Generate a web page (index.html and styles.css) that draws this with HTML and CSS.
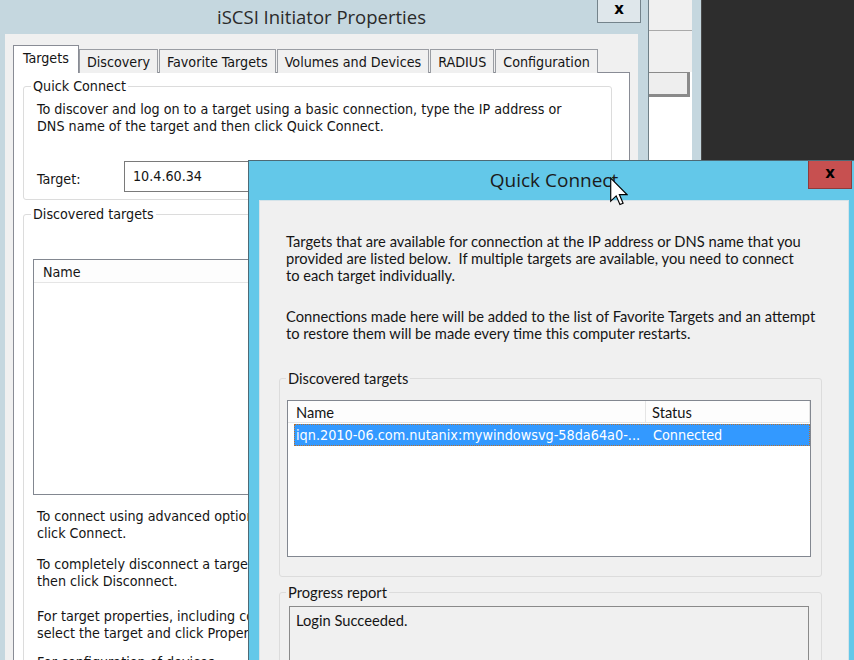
FILE: index.html
```html
<!DOCTYPE html>
<html>
<head>
<meta charset="utf-8">
<title>iSCSI Initiator Properties - Quick Connect</title>
<link rel="stylesheet" href="styles.css">
</head>
<body>
<div class="desktop">

  <div class="win side">
    <div class="side-top"></div>
    <div class="side-mid"></div>
    <div class="side-body">
      <div class="side-field"></div>
    </div>
  </div>

  <div class="win main">
    <div class="titlebar">
      <span class="title">iSCSI Initiator Properties</span>
      <div class="close close-gray">x</div>
    </div>
    <div class="client">
      <div class="tabs">
        <div class="tab active">Targets</div>
        <div class="tab">Discovery</div>
        <div class="tab">Favorite Targets</div>
        <div class="tab">Volumes and Devices</div>
        <div class="tab">RADIUS</div>
        <div class="tab">Configuration</div>
      </div>
      <div class="panel">
        <fieldset class="group group-qc">
          <legend>Quick Connect</legend>
          <p class="txt qc-intro">To discover and log on to a target using a basic connection, type the IP address or<br>DNS name of the target and then click Quick Connect.</p>
          <div class="target-row">
            <span class="target-label">Target:</span>
            <div class="input">10.4.60.34</div>
          </div>
        </fieldset>
        <fieldset class="group group-dt">
          <legend>Discovered targets</legend>
          <div class="list list-main">
            <div class="list-head"><span class="head-cell head-main">Name</span></div>
          </div>
          <p class="txt note n1">To connect using advanced options, select a<br>click Connect.</p>
          <p class="txt note n2">To completely disconnect a target, sel<br>then click Disconnect.</p>
          <p class="txt note n3">For target properties, including co<br>select the target and click Propert</p>
          <p class="txt note n4">For configuration of devices</p>
        </fieldset>
      </div>
    </div>
  </div>

  <div class="win dialog">
    <div class="titlebar dlg-titlebar">
      <span class="title">Quick Connect</span>
      <div class="close close-red">x</div>
    </div>
    <div class="dlg-client">
      <p class="dtxt d1">Targets that are available for connection at the IP address or DNS name that you<br>provided are listed below.&nbsp; If multiple targets are available, you need to connect<br>to each target individually.</p>
      <p class="dtxt d2">Connections made here will be added to the list of Favorite Targets and an attempt<br>to restore them will be made every time this computer restarts.</p>
      <fieldset class="group dgroup dg1">
        <legend>Discovered targets</legend>
        <div class="list list-dlg">
          <div class="list-head">
            <span class="head-cell hc-name">Name</span>
            <span class="head-cell hc-status">Status</span>
          </div>
          <div class="row selected">
            <span class="cell c-name">iqn.2010-06.com.nutanix:mywindowsvg-58da64a0-...</span>
            <span class="cell c-status">Connected</span>
          </div>
        </div>
      </fieldset>
      <fieldset class="group dgroup dg2">
        <legend>Progress report</legend>
        <div class="report">Login Succeeded.</div>
      </fieldset>
    </div>
  </div>

  <svg class="cursor" width="18" height="29" viewBox="0 0 12.5 19.5">
    <path d="M0.5 0.5 L0.5 16.5 L4.3 12.8 L6.9 18.8 L9.1 17.9 L6.5 11.9 L11.8 11.9 Z" fill="#ffffff" stroke="#000000" stroke-width="0.8" stroke-linejoin="miter"/>
  </svg>

</div>
</body>
</html>
```

FILE: styles.css
```css
* { box-sizing: border-box; }
html, body { margin: 0; padding: 0; }
body {
  width: 854px;
  height: 660px;
  overflow: hidden;
  background: #2d2d2d;
  font-family: "DejaVu Sans Condensed", "DejaVu Sans", sans-serif;
  font-stretch: condensed;
  font-size: 14.2px;
  color: #151515;
}
.desktop {
  position: relative;
  width: 854px;
  height: 660px;
  overflow: hidden;
  background: #2d2d2d;
}
.win { position: absolute; }

/* ---------- window peeking on the right ---------- */
.side {
  left: 560px;
  top: 0;
  width: 142px;
  height: 680px;
  background: #c5d7df;
  border-right: 1px solid #4a4a4a;
  padding-right: 9px;
  display: flex;
  flex-direction: column;
}
.side-top { height: 31px; background: #f0f0f0; border-bottom: 1px solid #a9a9a9; }
.side-mid { height: 41px; background: #f0f0f0; }
.side-body { flex: 1; background: #ffffff; }
.side-field {
  height: 25px;
  margin-right: 2px;
  background: #eeeeee;
  border: 1px solid #8a8a8a;
  border-bottom-width: 3px;
  border-right-width: 3px;
}

/* ---------- main iSCSI window ---------- */
.main {
  left: -5px;
  top: 0;
  width: 654px;
  height: 700px;
  background: #c5d7df;
  border-right: 1px solid #6f7f87;
  padding: 0 10px 0 10px;
  display: flex;
  flex-direction: column;
}
.titlebar {
  height: 34px;
  display: flex;
  align-items: center;
  justify-content: center;
  flex: none;
}
.title {
  font-family: "Open Sans", "Noto Sans", sans-serif;
  font-stretch: normal;
  font-size: 18.5px;
  color: #2a2a2a;
}
.main .title { margin-top: -2px; }
.close {
  position: absolute;
  top: 0;
  width: 44px;
  height: 23px;
  display: flex;
  align-items: center;
  justify-content: center;
  font-family: "DejaVu Sans", sans-serif;
  font-stretch: normal;
  font-weight: bold;
  font-size: 15px;
  color: #000;
  line-height: 1;
}
.close-gray {
  right: 7px;
  background: #dfe7eb;
  border: 1px solid #74838b;
  border-top: none;
  padding-bottom: 4px;
}
.client {
  flex: 1;
  background: #f0f0f0;
  padding: 11px 8px 0 8px;
  display: flex;
  flex-direction: column;
}
.tabs {
  display: flex;
  align-items: flex-end;
  height: 28px;
  position: relative;
  z-index: 2;
  margin-bottom: -1px;
}
.tab {
  height: 24px;
  padding: 0 7px 0 7px;
  border: 1px solid #9a9da3;
  border-bottom: none;
  background: #f0f0f0;
  display: flex;
  align-items: center;
  margin-left: 1px;
  white-space: nowrap;
}
.tab.active {
  height: 28px;
  background: #ffffff;
  border-color: #898c95;
  margin-left: 0;
  padding: 0 9px 4px 9px;
}
.tab.active + .tab { margin-left: 0; }
.panel {
  flex: 1;
  background: #ffffff;
  border: 1px solid #898c95;
  padding: 5px 0 0 9px;
}

/* group boxes */
.group {
  margin: 0;
  padding: 0;
  border: 1px solid #dcdcdc;
  border-radius: 3px;
  min-inline-size: 0;
}
.group legend {
  padding: 0 2px;
  margin-left: 7px;
  line-height: 16px;
}
.txt { margin: 0; line-height: 17px; white-space: nowrap; }

.group-qc {
  width: 589px;
  padding-bottom: 7px;
}
.qc-intro { margin: 7px 0 0 13px; }
.target-row {
  display: flex;
  align-items: center;
  margin: 26px 0 0 13px;
}
.target-label { width: 87px; padding-top: 5px; }
.input {
  width: 420px;
  height: 31px;
  border: 1px solid #7a7a7a;
  background: #fff;
  padding-left: 8px;
  display: flex;
  align-items: center;
  padding-bottom: 1px;
}
.group-dt {
  width: 589px;
  height: 480px;
  margin-top: 6px;
}
.list {
  border: 1px solid #828790;
  background: #ffffff;
}
.list-main {
  width: 568px;
  height: 236px;
  margin: 37px 0 0 9px;
}
.list-head {
  display: flex;
  height: 22px;
}
.list-main .list-head { height: 23px; }
.head-cell {
  display: flex;
  align-items: center;
  background: #fdfdfd;
  border: 1px solid #e5e5e5;
  border-left: none;
  border-top: none;
}
.head-main { width: 300px; padding: 1px 0 0 9px; }
.note { margin-left: 13px; }
.n1 { margin-top: 13px; }
.n2 { margin-top: 14px; }
.n3 { margin-top: 18px; }
.n4 { margin-top: 12px; }

/* ---------- Quick Connect dialog ---------- */
.dialog {
  left: 248px;
  top: 160px;
  width: 612px;
  height: 540px;
  background: #63c8e9;
  border: 1px solid #4d6a75;
  padding: 0 10px;
  display: flex;
  flex-direction: column;
  z-index: 5;
}
.dlg-titlebar { height: 39px; }
.dlg-titlebar .title { font-size: 19px; color: #1b1b1b; margin-top: -1px; }
.close-red {
  right: 7px;
  height: 28px;
  background: #c75050;
  border: 1px solid #8f3b3b;
  border-top: none;
  padding-bottom: 2px;
}
.dlg-client {
  flex: 1;
  background: #f0f0f0;
  border: 1px solid #d4e3e9;
  padding: 32px 0 0 19px;
  font-family: "Lato", "Open Sans", sans-serif;
  font-stretch: normal;
  font-size: 14.7px;
}
.dtxt { margin: 0 0 0 7px; line-height: 17px; white-space: nowrap; }
.d2 { margin-top: 24px; }
.dgroup {
  width: 543px;
  border-color: #dcdcdc;
}
.dgroup legend { margin-left: 6px; }
.dg1 {
  margin-top: 28px;
  padding-bottom: 19px;
}
.list-dlg {
  width: 524px;
  height: 157px;
  margin: 14px 0 0 7px;
}
.hc-name { width: 358px; padding-left: 8px; }
.hc-status { flex: 1; padding-left: 6px; }
.row {
  display: flex;
  height: 22px;
  margin: 1px 0 0 6px;
}
.row.selected {
  background: #3399ff;
  border: 1px dotted #b9702d;
  color: #ffffff;
  font-family: "DejaVu Sans Condensed", "DejaVu Sans", sans-serif;
  font-stretch: condensed;
  font-size: 14.3px;
}
.cell { display: flex; align-items: center; white-space: nowrap; }
.c-name { width: 351px; padding-left: 1px; }
.c-status { padding-left: 7px; }
.dg2 {
  margin-top: 7px;
  height: 120px;
}
.report {
  width: 520px;
  height: 90px;
  margin: 6px 0 0 9px;
  border: 1px solid #8a8a8a;
  background: #f0f0f0;
  padding: 5px 0 0 6px;
  line-height: 17px;
}

/* mouse pointer on top of everything */
.cursor {
  position: absolute;
  left: 610px;
  top: 177px;
  z-index: 10;
}
```
